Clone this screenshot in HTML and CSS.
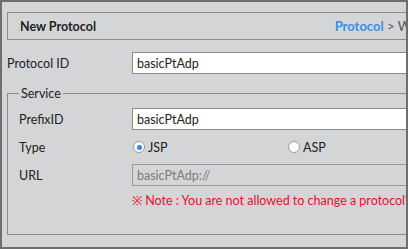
FILE: index.html
```html
<!DOCTYPE html>
<html lang="en">
<head>
  <meta charset="UTF-8">
  <title>New Protocol</title>
  <link rel="stylesheet" href="styles.css">
</head>
<body>
  <div class="frame">
    <div class="panel">
      <div class="header">
        <span class="title">New Protocol</span>
        <span class="crumbs"><span class="crumb-link">Protocol</span> &gt; Write</span>
      </div>

      <div class="row top-row">
        <label class="label">Protocol ID</label>
        <input class="field" type="text" value="basicPtAdp">
      </div>

      <fieldset class="service">
        <legend>Service</legend>

        <div class="row">
          <label class="label">PrefixID</label>
          <input class="field" type="text" value="basicPtAdp">
        </div>

        <div class="row">
          <label class="label">Type</label>
          <div class="radios">
            <label class="radio"><input type="radio" name="type" checked> JSP</label>
            <label class="radio"><input type="radio" name="type"> ASP</label>
          </div>
        </div>

        <div class="row">
          <label class="label">URL</label>
          <input class="field" type="text" value="basicPtAdp://" disabled>
        </div>

        <div class="row note-row">
          <span class="label"></span>
          <span class="note">※ Note : You are not allowed to change a protocol's information after it is saved.</span>
        </div>
      </fieldset>
    </div>
  </div>
</body>
</html>
```

FILE: styles.css
```css
* {
  margin: 0;
  padding: 0;
  box-sizing: border-box;
}

body {
  font-family: Lato, "Open Sans", Arial, sans-serif;
  font-size: 12.5px;
  color: #222;
  background: #d4d5d7;
}

.frame {
  width: 408px;
  height: 249px;
  border: 2px solid #6e6e6e;
  background: #d4d5d7;
  overflow: hidden;
  padding: 10px 0 0 5px;
}

.panel {
  width: 436px;
}

.header {
  display: flex;
  align-items: center;
  height: 28px;
  border: 1px solid #8c8c8c;
  padding: 0 12px;
}

.title {
  font-weight: bold;
  font-size: 12.5px;
  color: #1f1f1f;
}

.crumbs {
  margin-left: auto;
  font-size: 13px;
  color: #555;
}

.crumb-link {
  color: #3b8ee8;
  font-weight: bold;
}

.row {
  display: flex;
  align-items: center;
  min-height: 22px;
}

.top-row {
  margin: 12px 0 0;
}

.label {
  width: 125px;
  flex-shrink: 0;
}

.service .label {
  width: 113px;
}

.field {
  width: 310px;
  height: 22px;
  border: 1px solid #8c8c8c;
  background: #fff;
  font: inherit;
  color: #222;
  padding: 0 4px;
}

.field:disabled {
  background: #d4d5d7;
  color: #7a7a7a;
  border-color: #9a9a9a;
}

.service {
  margin-top: 12px;
  border: 1px solid #8c8c8c;
  padding: 7px 10px 0 11px;
  height: 149px;
  display: flex;
  flex-direction: column;
  gap: 6px;
}

.service legend {
  padding: 0 2px;
  color: #222;
}

.radios {
  display: flex;
  width: 310px;
}

.radio {
  width: 50%;
  display: flex;
  align-items: center;
  gap: 3px;
}

.radio input {
  appearance: none;
  width: 12px;
  height: 12px;
  border: 1px solid #9a9a9a;
  border-radius: 50%;
  background: #fff;
  margin-left: 1px;
  position: relative;
}

.radio input:checked::after {
  content: "";
  position: absolute;
  left: 2.5px;
  top: 2.5px;
  width: 5px;
  height: 5px;
  border-radius: 50%;
  background: #2f86e8;
}

.note-row {
  min-height: 18px;
  margin-top: -1px;
}

.note {
  color: #e3112f;
  white-space: nowrap;
}
```
